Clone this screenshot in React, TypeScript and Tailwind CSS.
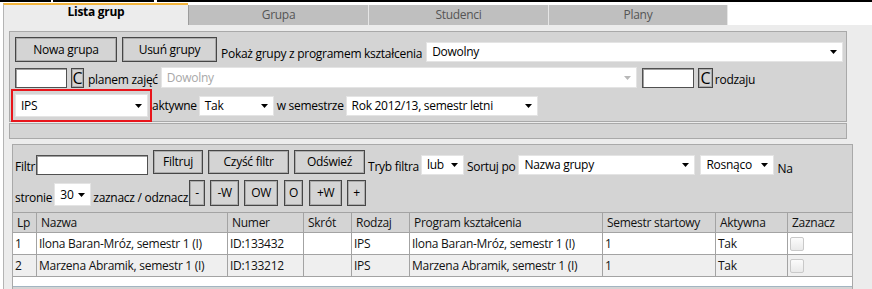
import React from "react";

function Arrow({ light }: { light?: boolean }) {
	return (
		<svg width="7" height="4" viewBox="0 0 7 4" className="absolute right-[5px] top-1/2 -translate-y-1/2">
			<path d="M0 0h7L3.5 4z" fill={light ? "#b8b8b8" : "#000"} />
		</svg>
	);
}

function Select({ value, className, disabled }: { value: string; className: string; disabled?: boolean }) {
	return (
		<div
			className={`relative flex items-center bg-white border border-[#e4e4e4] pl-[5px] leading-[16px] whitespace-nowrap ${
				disabled ? "text-[#a8a8a8]" : "text-black"
			} ${className}`}
		>
			{value}
			<Arrow light={disabled} />
		</div>
	);
}

function TextBox({ className }: { className: string }) {
	return <div className={`bg-white border border-[#505050] shadow-[inset_1px_1px_0_#a0a0a0] ${className}`} />;
}

function Btn({ children, className }: { children: React.ReactNode; className: string }) {
	return (
		<button
			type="button"
			className={`flex items-center justify-center bg-[#d4d4d4] border border-[#464646] shadow-[inset_0_0_0_1px_#ababab] leading-[16px] whitespace-nowrap ${className}`}
		>
			{children}
		</button>
	);
}

function Label({ children, className = "" }: { children: React.ReactNode; className?: string }) {
	return <span className={`leading-[16px] whitespace-nowrap ${className}`}>{children}</span>;
}

const columns = ["Lp", "Nazwa", "Numer", "Skrót", "Rodzaj", "Program kształcenia", "Semestr startowy", "Aktywna", "Zaznacz"];

const rows = [
	["1", "Ilona Baran-Mróz, semestr 1 (I)", "ID:133432", "", "IPS", "Ilona Baran-Mróz, semestr 1 (I)", "1", "Tak"],
	["2", "Marzena Abramik, semestr 1 (I)", "ID:133212", "", "IPS", "Marzena Abramik, semestr 1 (I)", "1", "Tak"],
];

export default function App() {
	return (
		<div className="w-[872px] h-[289px] overflow-hidden bg-white font-['Open_Sans',sans-serif] text-[12px] tracking-[-0.28px] text-black">
			{/* top strip */}
			<div className="flex h-[2px]">
				<div className="w-[51px] bg-black" />
				<div className="w-[2px]" />
				<div className="w-[101px] bg-black" />
				<div className="w-[3px]" />
				<div className="flex-1 bg-black" />
			</div>

			{/* tabs */}
			<div className="flex items-end h-[23px] pl-[3px]">
				<div className="w-[185px] h-[22px] border-t-2 border-t-[#f2b43c] border-l border-l-[#b4b4b4] bg-[#ececec] font-bold text-center leading-[14px]">
					Lista grup
				</div>
				<div className="w-[180px] h-[20px] bg-[#bfbfbf] border-l border-[#9c9c9c] text-[#555] text-center leading-[20px]">Grupa</div>
				<div className="w-[180px] h-[20px] bg-[#bfbfbf] border-l border-[#e6e6e6] text-[#555] text-center leading-[20px]">Studenci</div>
				<div className="w-[180px] h-[20px] bg-[#bfbfbf] border-x border-[#e6e6e6] text-[#555] text-center leading-[20px]">Plany</div>
			</div>

			{/* content */}
			<div className="ml-[3px] h-[264px] border-l border-[#b4b4b4] bg-[#ececec] pt-[6px]">
				<div className="ml-[5px] w-[838px] h-[91px] border border-[#a9a9a9] bg-[#d4d4d4]">
					<div className="flex items-end mt-[5px] pl-[5px]">
						<Btn className="w-[102px] h-[25px]">Nowa grupa</Btn>
						<Btn className="ml-[5px] w-[95px] h-[25px]">Usuń grupy</Btn>
						<Label className="ml-[4px]">Pokaż grupy z programem kształcenia</Label>
						<Select value="Dowolny" className="ml-[4px] w-[417px] h-[20px]" />
					</div>
					<div className="flex items-end mt-[5px] pl-[5px]">
						<TextBox className="w-[52px] h-[20px]" />
						<Btn className="ml-[4px] w-[13px] h-[20px] text-[16px]">C</Btn>
						<Label className="ml-[4px]">planem zajęć</Label>
						<Select value="Dowolny" disabled className="ml-[3px] w-[476px] h-[21px]" />
						<TextBox className="ml-[5px] w-[52px] h-[20px]" />
						<Btn className="ml-[4px] w-[15px] h-[20px] text-[16px]">C</Btn>
						<Label className="ml-[2px]">rodzaju</Label>
					</div>
					<div className="flex items-center mt-[1px] pl-[1px]">
						<div className="border-2 border-[#e8151b] px-[2px] py-[3px]">
							<Select value="IPS" className="w-[133px] h-[23px]" />
						</div>
						<Label>aktywne</Label>
						<Select value="Tak" className="ml-[2px] w-[75px] h-[20px]" />
						<Label className="ml-[3px]">w semestrze</Label>
						<Select value="Rok 2012/13, semestr letni" className="ml-[2px] w-[192px] h-[20px]" />
					</div>
				</div>

				<div className="mt-[1px] ml-[5px] w-[838px] h-[16px] border border-[#a9a9a9] bg-[#d4d4d4]" />

				<div className="mt-[5px] ml-[8px] w-[841px] h-[160px] border border-[#a9a9a9] bg-[#d4d4d4]">
					<div className="flex items-end mt-[5px] pl-[2px]">
						<Label>Filtr</Label>
						<TextBox className="ml-[1px] w-[112px] h-[20px]" />
						<Btn className="ml-[5px] mb-[1px] w-[50px] h-[24px]">Filtruj</Btn>
						<Btn className="ml-[5px] mb-[1px] w-[81px] h-[24px]">Czyść filtr</Btn>
						<Btn className="ml-[5px] mb-[1px] w-[71px] h-[24px]">Odświeź</Btn>
						<Label className="ml-[3px]">Tryb filtra</Label>
						<Select value="lub" className="ml-[2px] w-[43px] h-[20px]" />
						<Label className="ml-[3px]">Sortuj po</Label>
						<Select value="Nazwa grupy" className="ml-[3px] w-[177px] h-[20px]" />
						<Select value="Rosnąco" className="ml-[5px] w-[74px] h-[20px]" />
						<Label className="ml-[3px] -mb-[2px]">Na</Label>
					</div>
					<div className="flex items-end mt-[5px] pl-[2px]">
						<Label>stronie</Label>
						<Select value="30" className="ml-[2px] w-[37px] h-[23px]" />
						<Label className="ml-[2px]">zaznacz / odznacz</Label>
						<Btn className="ml-[1px] w-[16px] h-[26px]">-</Btn>
						<Btn className="ml-[5px] w-[29px] h-[26px]">-W</Btn>
						<Btn className="ml-[5px] w-[34px] h-[26px]">OW</Btn>
						<Btn className="ml-[6px] w-[19px] h-[26px]">O</Btn>
						<Btn className="ml-[6px] w-[33px] h-[26px]">+W</Btn>
						<Btn className="ml-[5px] w-[19px] h-[26px]">+</Btn>
					</div>

					{/* table */}
					<div className="mt-[6px] text-[#111]">
						<div className="grid grid-cols-[23px_191px_76px_48px_58px_193px_113px_72px_65px] h-[21px] border-y border-[#a3a3a3] bg-[#d4d4d4]">
							{columns.map((c, i) => (
								<div key={c} className={`flex items-center pl-[4px] leading-[16px] whitespace-nowrap ${i > 0 ? "border-l border-[#a3a3a3]" : ""}`}>
									{c}
								</div>
							))}
						</div>
						{rows.map((r, ri) => (
							<div
								key={ri}
								className={`grid grid-cols-[23px_191px_76px_48px_58px_193px_113px_72px_65px] h-[22px] border-b border-[#a3a3a3] ${
									ri % 2 === 1 ? "bg-[#efefef]" : "bg-white"
								}`}
							>
								{r.map((v, i) => (
									<div key={i} className={`flex items-center pl-[2px] leading-[16px] whitespace-nowrap ${i > 0 ? "border-l border-[#a3a3a3]" : ""}`}>
										{v}
									</div>
								))}
								<div className="flex items-center pl-[2px] border-l border-[#a3a3a3]">
									<div className="w-[14px] h-[14px] rounded-[2px] border border-[#c9c9c9] bg-gradient-to-b from-[#fbfbfb] to-[#e9e9e9]" />
								</div>
							</div>
						))}
						<div className="h-[10px] bg-white border-b border-[#a3b5c2]" />
					</div>
				</div>
			</div>
		</div>
	);
}
